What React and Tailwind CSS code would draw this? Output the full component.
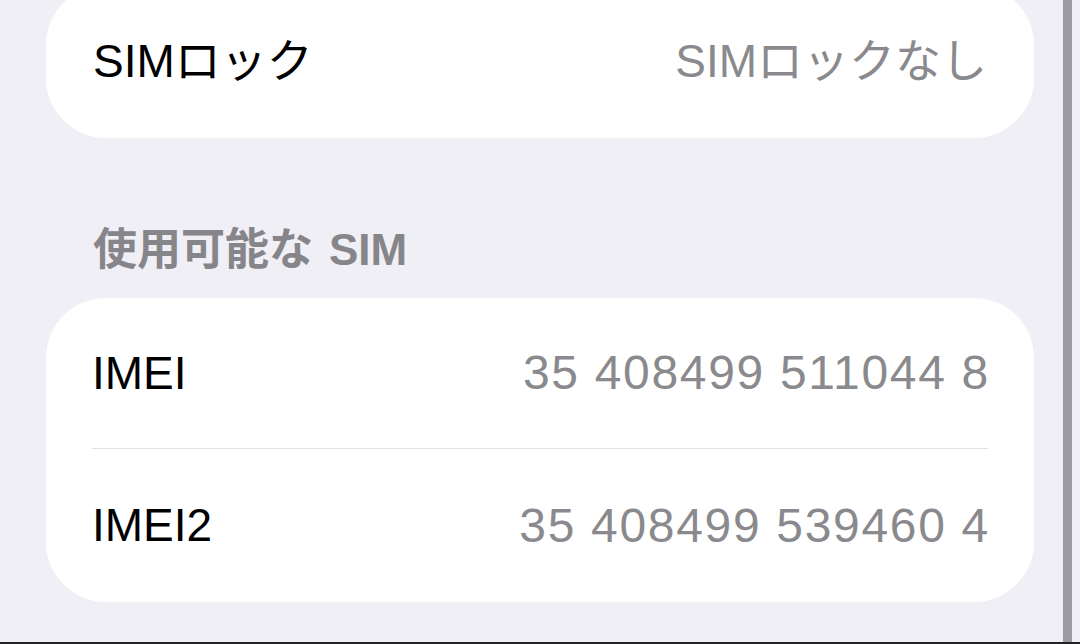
import React from 'react';

const font = "font-['Liberation_Sans','Noto_Sans_CJK_JP',sans-serif]";

const Row = ({ label, value, mono, last }) => (
  <div className={`flex items-center justify-between ${last ? 'h-[153px]' : 'h-[151px] border-b border-[#e1e1e4]'}`}>
    <span className="text-[46px] text-black">{label}</span>
    <span className={`text-[#8a8a8e] ${mono ? 'text-[48px] tracking-[0.035em] -mr-[2px]' : 'text-[46px]'}`}>{value}</span>
  </div>
);

export default function App() {
  return (
    <div className={`relative h-[644px] w-[1080px] overflow-hidden bg-[#f0eff5] flex flex-col ${font}`}>
      <div className="mx-[46px] w-[988px] -mt-[15px] rounded-[60px] bg-white px-[47px]">
        <Row label="SIMロック" value="SIMロックなし" last />
      </div>

      <div className="mt-[87px] mb-[23px] h-[50px] px-[93px] flex items-center text-[44px] font-bold text-[#85858a]">
        使用可能な<span className="ml-[16px]">SIM</span>
      </div>

      <div className="mx-[46px] w-[988px] rounded-[60px] bg-white px-[46px]">
        <Row label="IMEI" value="35 408499 511044 8" mono />
        <Row label="IMEI2" value="35 408499 539460 4" mono last />
      </div>

      <div className="flex-1" />
      <div className="h-[2px] bg-[#232325]" />

      {/* window edge strip on the right */}
      <div className="absolute top-0 bottom-[2px] left-[1063px] w-[9px] bg-[#9c9ba1]" />
    </div>
  );
}
